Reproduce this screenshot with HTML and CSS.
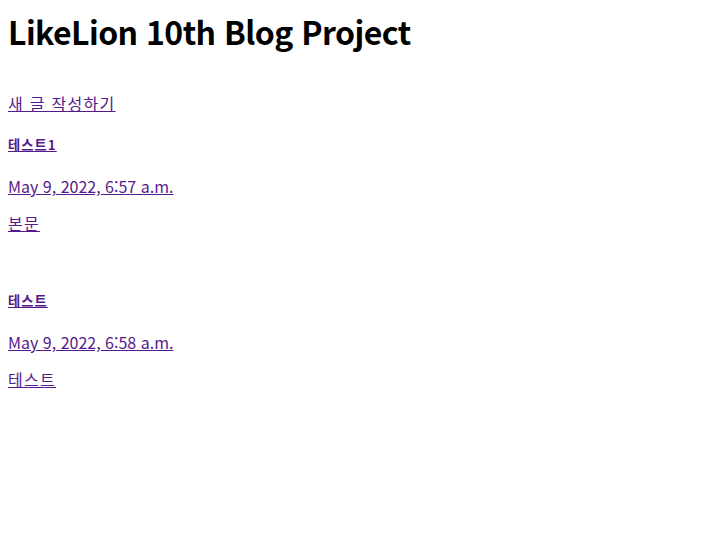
FILE: index.html
```html
<!DOCTYPE html>
<html lang="ko">
<head>
<meta charset="utf-8">
<title>LikeLion 10th Blog Project</title>
<link rel="stylesheet" href="styles.css">
</head>
<body>
<h1 class="title">LikeLion 10th Blog Project</h1>
<p class="new"><a class="ko" href="#new">새 글 작성하기</a></p>
<div class="posts">
  <article class="post">
    <h5 class="post-title"><a class="ko" href="#p1">테스트1</a></h5>
    <p class="post-date"><a href="#p1">May 9, 2022, 6:57 a.m.</a></p>
    <p class="post-body"><a class="ko" href="#p1">본문</a></p>
  </article>
  <article class="post">
    <h5 class="post-title"><a class="ko" href="#p2">테스트</a></h5>
    <p class="post-date"><a href="#p2">May 9, 2022, 6:58 a.m.</a></p>
    <p class="post-body"><a class="ko" href="#p2">테스트</a></p>
  </article>
</div>
</body>
</html>
```

FILE: styles.css
```css
html, body {
  background: #fff;
}
body {
  margin: 0;
  padding: 8px;
  font-family: "Noto Sans CJK KR", "Noto Sans", sans-serif;
  color: #000;
}
a {
  color: #551a8b;
  text-decoration: underline;
}
.ko {
  letter-spacing: 0.08em;
}
.title {
  margin: 2px 0 0;
  font-size: 32px;
  line-height: 42px;
  font-weight: 700;
  letter-spacing: -0.55px;
}
.new {
  margin: 41px 0 0;
  font-size: 16px;
  line-height: 21px;
}
.posts {
  display: flex;
  flex-direction: column;
  gap: 58px;
  margin-top: 22px;
}
.post-title {
  margin: 0;
  font-size: 13.28px;
  line-height: 18px;
  font-weight: 700;
}
.post-date {
  margin: 22px 0 0;
  font-size: 16px;
  line-height: 21px;
}
.post-body {
  margin: 16px 0 0;
  font-size: 16px;
  line-height: 21px;
}
```
